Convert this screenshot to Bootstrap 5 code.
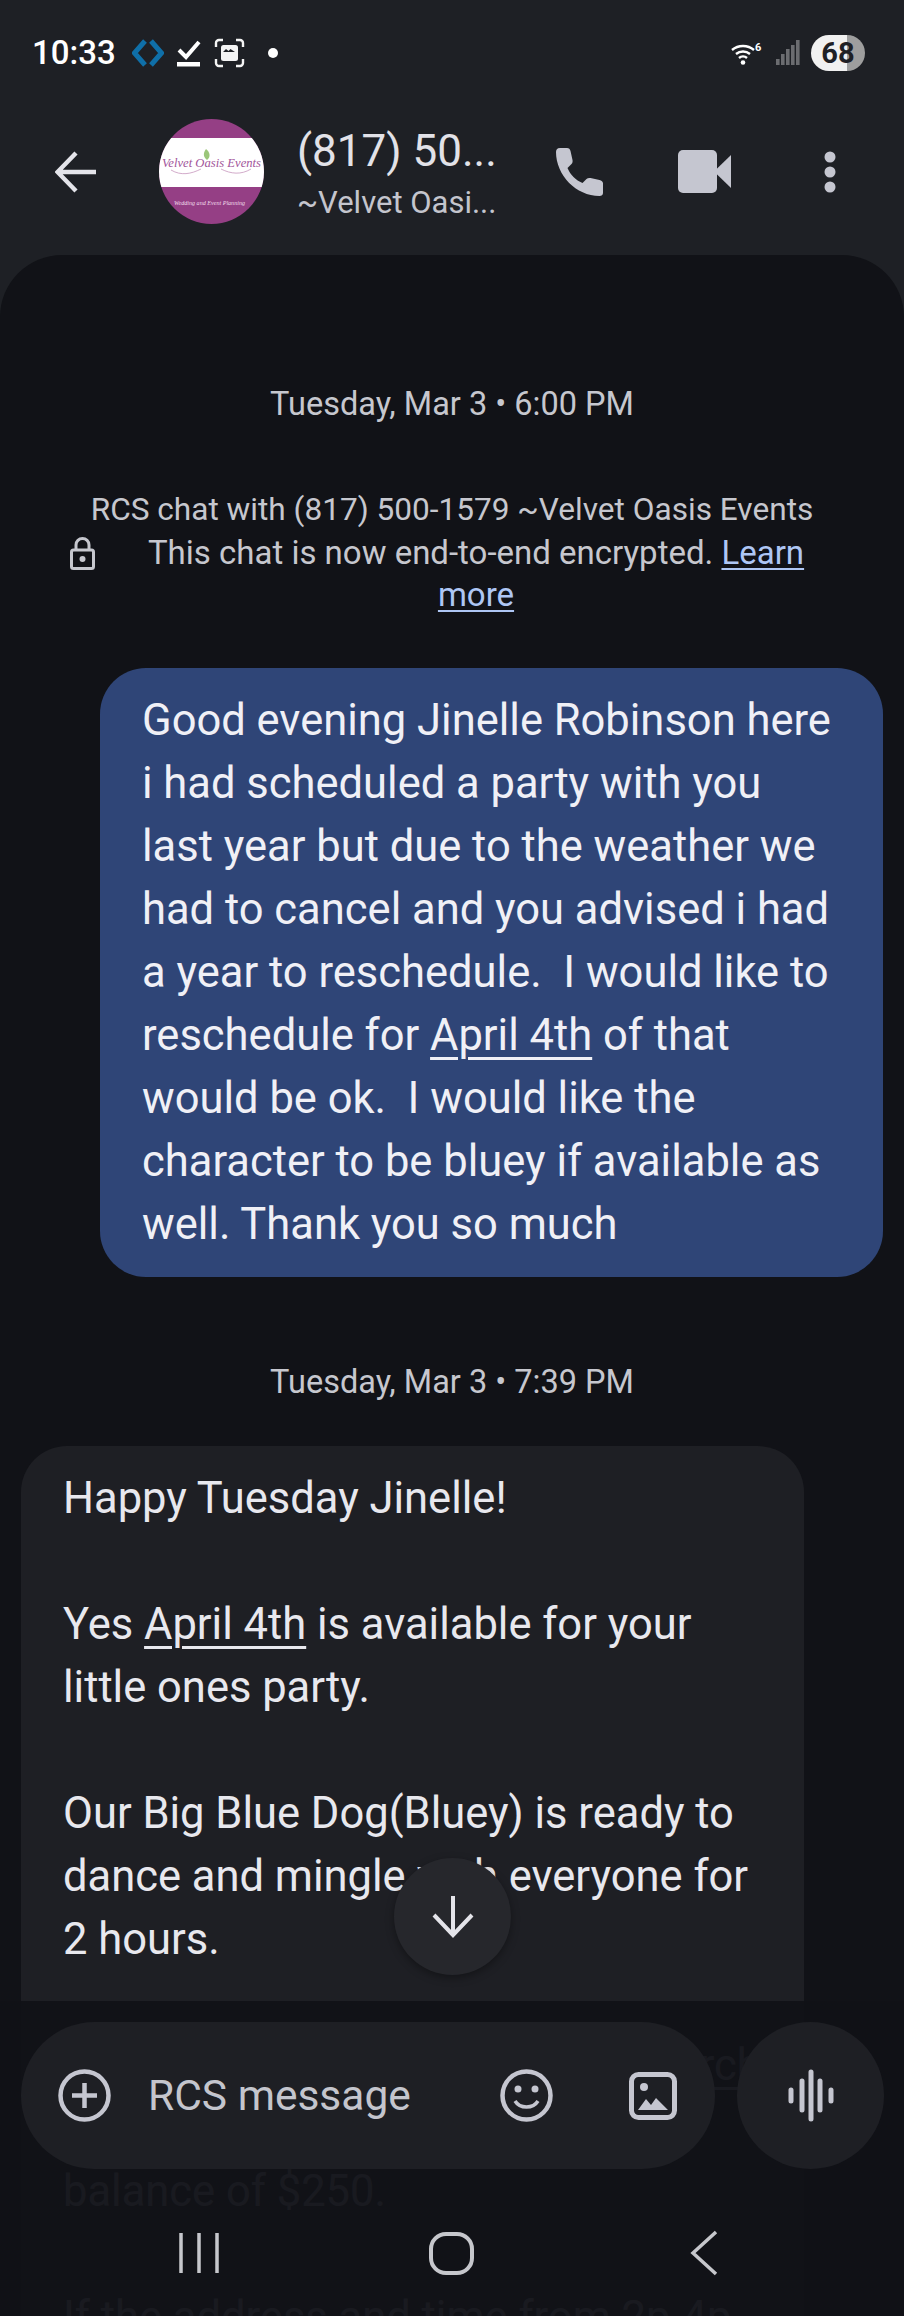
<!DOCTYPE html>
<html lang="en">
<head>
<meta charset="UTF-8">
<meta name="viewport" content="width=device-width, initial-scale=1.0">
<title>Messages</title>
<link href="https://cdn.jsdelivr.net/npm/bootstrap@5.3.0/dist/css/bootstrap.min.css" rel="stylesheet">
<style>
  body { background: #1e2025; font-family: Roboto, "Noto Sans", sans-serif; color: #e6e6ec; }
  .phone { width: 904px; height: 2316px; overflow: hidden; background: #1e2025; }
  .status-row { height: 106px; flex: none; padding: 0 39px 0 32px; }
  .status-time { font-size: 33px; font-weight: 500; color: #fff; margin-right: 16px; }
  .st-check { margin-left: 13px; }
  .st-shot { margin-left: 13px; }
  .st-dot { margin-left: 22px; }
  .st-wifi { margin-left: auto; margin-right: 13px; }
  .st-signal { margin-right: 11px; }
  .batt { width: 54px; height: 36px; border-radius: 18px; font-size: 29px; font-weight: 700; color: #1e2025; line-height: 36px; text-align: center; background: linear-gradient(90deg, #f1f1f1 0, #f1f1f1 36px, #9e9e9e 36px); }
  .app-row { height: 149px; flex: none; padding: 0 67px 18px 55px; }
  .avatar { width: 105px; height: 105px; margin-left: 62px; flex: none; }
  .chat-title { width: 200px; margin: 3px 0 0 33px; }
  .chat-title div { white-space: nowrap; line-height: 1; }
  .title-main { font-size: 44px; color: #e2e2e8; margin-bottom: 14px; }
  .title-sub { font-size: 31px; color: #c4c5cd; }
  .ab-video { margin-left: 75px; }
  .ab-dots { margin-left: 92px; }
  .chat-panel { flex: 1; background: #111217; border-radius: 62px 62px 0 0; padding: 0 21px; overflow: hidden; }
  .stamp { font-size: 32.5px; line-height: 42px; color: #c6c7ce; text-align: center; }
  .stamp-first { padding-top: 128px; }
  .stamp-second { margin: 84px 0 43px; }
  .enc-block { margin: 64px 0 51px; color: #c6c7ce; line-height: 42.5px; text-align: center; }
  .enc-one { font-size: 31.6px; }
  .enc-block a { color: #aec6f4; text-decoration-thickness: 2px; text-underline-offset: 4px; }
  .lock-col { width: 50px; margin-left: 49px; flex: none; text-align: left; }
  .enc-text { width: 680px; margin-left: 16px; font-size: 33px; }
  .bubble { font-size: 43.5px; line-height: 63px; padding: 21px 42px; white-space: pre-wrap; color: #e8e8ee; }
  .bubble u { text-decoration-thickness: 3px; text-underline-offset: 7px; }
  .bubble-out { width: 783px; margin-left: 79px; background: #2f4577; border-radius: 46px; color: #f0f0f6; }
  .bubble-in { width: 783px; background: #1e1f24; border-radius: 46px 46px 0 0; }
  .ghost-gap { padding-left: 575px; }
  .scrim { left: 0; right: 0; top: 2001px; bottom: 0; background: rgba(17, 18, 23, .96); }
  .jump-btn { width: 117px; height: 117px; left: 394px; top: 1858px; background: #26272c; box-shadow: 0 3px 8px rgba(0, 0, 0, .35); }
  .composer { left: 21px; top: 2022px; width: 694px; height: 147px; border-radius: 74px; background: #1e1f24; padding-left: 37px; }
  .composer-text { font-size: 42.5px; color: #c4c5cd; margin-left: 37px; width: 352px; }
  .cp-image { margin-left: 76px; }
  .mic-btn { left: 737px; top: 2022px; width: 147px; height: 147px; background: #1e1f24; }
  .nav-row { left: 0; right: 0; top: 2228px; height: 50px; }
</style>
</head>
<body class="m-0">
<div class="phone position-relative d-flex flex-column">

  <!-- status bar -->
  <div class="status-row d-flex align-items-center">
    <span class="status-time">10:33</span>
    <svg width="32" height="30" viewBox="0 0 32 30"><path d="M13 3 2.500 15 13 27M19 3 29.500 15 19 27" fill="none" stroke="#0f6fa8" stroke-width="5"/></svg>
    <svg width="24" height="28" viewBox="0 0 24 28" class="st-check"><path d="M2 11l7 7L22 3" fill="none" stroke="#fff" stroke-width="4"/><rect y="23" width="23" height="4.500" fill="#fff"/></svg>
    <svg width="31" height="30" viewBox="0 0 31 30" class="st-shot"><path d="M2 9V5a3 3 0 0 1 3-3h4M22 2h4a3 3 0 0 1 3 3v4M29 21v4a3 3 0 0 1-3 3h-4M9 28H5a3 3 0 0 1-3-3v-4" fill="none" stroke="#f4f4f4" stroke-width="2.400"/><rect x="7" y="7" width="17" height="16" rx="2.500" fill="#f4f4f4"/><path d="M9 14l3-3 2.500 2 2-2 4.500 3z" fill="#1e2025"/></svg>
    <svg width="12" height="12" viewBox="0 0 12 12" class="st-dot"><circle cx="6" cy="6" r="5" fill="#fff"/></svg>
    <svg width="32" height="24" viewBox="0 0 32 24" class="st-wifi"><path d="M1 9a17 17 0 0 1 22 0M5 13a11 11 0 0 1 14 0M8 17a6 6 0 0 1 8 0" fill="none" stroke="#fff" stroke-width="2.400"/><circle cx="12" cy="21.500" r="2.300" fill="#fff"/><text x="24" y="10" font-size="11" font-weight="700" fill="#fff" font-family="Roboto, sans-serif">6</text></svg>
    <svg width="24" height="26" viewBox="0 0 24 26" class="st-signal"><rect x="0" y="19" width="3.600" height="6" fill="#6b6c70"/><rect x="5" y="14" width="3.600" height="11" fill="#6b6c70"/><rect x="10" y="9" width="3.600" height="16" fill="#6b6c70"/><rect x="15" y="5" width="3.600" height="20" fill="#6b6c70"/><rect x="20" y="0" width="3.600" height="25" fill="#6b6c70"/></svg>
    <span class="batt">68</span>
  </div>

  <!-- app bar -->
  <div class="app-row d-flex align-items-center">
    <svg width="42" height="42" viewBox="0 0 42 42" class="flex-shrink-0"><path d="M41 21H3M21 2 2.500 21 21 40" fill="none" stroke="#e4e4ea" stroke-width="4.400"/></svg>
    <svg class="avatar" viewBox="0 0 105 105">
      <defs><clipPath id="round"><circle cx="52.500" cy="52.500" r="52.500"/></clipPath></defs>
      <g clip-path="url(#round)">
        <rect width="105" height="105" fill="#953f85"/>
        <rect y="19" width="105" height="49" fill="#fff"/>
        <path d="M48 41c-4-3-4-7-1-11 4 3 5 8 1 11z" fill="#9bc67a"/>
        <text x="3" y="48" font-size="13" font-style="italic" textLength="99" lengthAdjust="spacingAndGlyphs" fill="#a2559a" font-family="Liberation Serif, serif">Velvet Oasis Events</text>
        <path d="M12 51c10 6 20 4 30-1M62 50c10 5 20 6 30 0" fill="none" stroke="#c795bd" stroke-width=".8"/>
        <text x="15" y="86" font-size="7" font-style="italic" textLength="71" lengthAdjust="spacingAndGlyphs" fill="#f1dcec" font-family="Liberation Serif, serif">Wedding and Event Planning</text>
      </g>
    </svg>
    <div class="chat-title">
      <div class="title-main">(817) 50...</div>
      <div class="title-sub">~Velvet Oasi...</div>
    </div>
    <svg width="48" height="48" viewBox="0 0 48 48" class="ms-auto flex-shrink-0"><path d="M1 4c0-2 1-4 4-4h7c2 0 3 1 3.500 3l2 9c.3 1.500 0 3-1 4l-4 4c3 7 8 12 15 15l4-4c1-1 2.500-1.300 4-1l9 2c2 .5 3.500 1.500 3.500 3.500V45c0 2-1.500 3-3.500 3C21 48 1 27 1 4z" fill="#c5c6d0"/></svg>
    <svg width="53" height="43" viewBox="0 0 53 43" class="flex-shrink-0 ab-video"><rect width="39" height="43" rx="5" fill="#c5c6d0"/><path d="M36 21.500 53 5v33z" fill="#c5c6d0"/></svg>
    <svg width="14" height="42" viewBox="0 0 14 42" class="flex-shrink-0 ab-dots"><circle cx="7" cy="6" r="5.500" fill="#c5c6d0"/><circle cx="7" cy="21" r="5.500" fill="#c5c6d0"/><circle cx="7" cy="36" r="5.500" fill="#c5c6d0"/></svg>
  </div>

  <!-- conversation -->
  <div class="chat-panel">
    <div class="stamp stamp-first">Tuesday, Mar 3 • 6:00 PM</div>
    <div class="enc-block">
      <div class="enc-one">RCS chat with (817) 500-1579 ~Velvet Oasis Events</div>
      <div class="d-flex align-items-start">
        <div class="lock-col"><svg width="25" height="33" viewBox="0 0 25 33"><path d="M6 13V8a6.500 6.500 0 0 1 13 0v5" fill="none" stroke="#c6c7ce" stroke-width="3"/><rect x="1.500" y="13" width="22" height="18.500" rx="2" fill="none" stroke="#c6c7ce" stroke-width="3"/><circle cx="12.500" cy="22" r="3" fill="#c6c7ce"/></svg></div>
        <div class="enc-text">This chat is now end-to-end encrypted. <a href="#">Learn more</a></div>
      </div>
    </div>
    <div class="bubble bubble-out">Good evening Jinelle Robinson here
i had scheduled a party with you
last year but due to the weather we
had to cancel and you advised i had
a year to reschedule.  I would like to
reschedule for <u>April 4th</u> of that
would be ok.  I would like the
character to be bluey if available as
well. Thank you so much</div>
    <div class="stamp stamp-second">Tuesday, Mar 3 • 7:39 PM</div>
    <div class="bubble bubble-in">Happy Tuesday Jinelle!

Yes <u>April 4th</u> is available for your
little ones party.

Our Big Blue Dog(Bluey) is ready to
dance and mingle with everyone for
2 hours.

<span class="ghost-gap"><u>March</u></span>

balance of $250.

If the address and time from 2p-4p</div>
  </div>

  <!-- overlays -->
  <div class="scrim position-absolute"></div>
  <div class="jump-btn position-absolute rounded-circle d-flex align-items-center justify-content-center">
    <svg width="44" height="44" viewBox="0 0 44 44"><path d="M22 1v39M3 20l19 20 19-20" fill="none" stroke="#e4e4ea" stroke-width="4"/></svg>
  </div>
  <div class="composer position-absolute d-flex align-items-center">
    <svg width="53" height="53" viewBox="0 0 53 53" class="flex-shrink-0"><circle cx="26.500" cy="26.500" r="24" fill="none" stroke="#c5c6d0" stroke-width="4.500"/><path d="M26.500 14v25M14 26.500h25" stroke="#c5c6d0" stroke-width="4.500"/></svg>
    <span class="composer-text">RCS message</span>
    <svg width="53" height="53" viewBox="0 0 53 53" class="flex-shrink-0"><circle cx="26.500" cy="26.500" r="24" fill="none" stroke="#c5c6d0" stroke-width="4.500"/><circle cx="18" cy="20" r="3.500" fill="#c5c6d0"/><circle cx="35" cy="20" r="3.500" fill="#c5c6d0"/><path d="M15 32c5 8 18 8 23 0" fill="none" stroke="#c5c6d0" stroke-width="3.500"/></svg>
    <svg width="48" height="48" viewBox="0 0 48 48" class="flex-shrink-0 cp-image"><rect x="2.500" y="2.500" width="43" height="43" rx="7" fill="none" stroke="#c5c6d0" stroke-width="5"/><circle cx="15" cy="15" r="4" fill="#c5c6d0"/><path d="M9 38l8-11 5 6 5-7 12 12z" fill="#c5c6d0"/></svg>
  </div>
  <div class="mic-btn position-absolute rounded-circle d-flex align-items-center justify-content-center">
    <svg width="46" height="53" viewBox="0 0 46 53"><g stroke="#c5c6d0" stroke-width="5" stroke-linecap="round"><path d="M3 21v11M14 12v29M23 3v47M32 12v29M43 21v11"/></g></svg>
  </div>
  <div class="nav-row position-absolute">
    <svg width="904" height="50" viewBox="0 0 904 50" class="d-block">
      <g fill="none" stroke="#c6c7cc" stroke-width="3.500">
        <path d="M181 5v40M199 5v40M217 5v40"/>
        <rect x="431" y="6" width="41" height="39" rx="15" stroke-width="4"/>
        <path d="M716 4 693 25l23 21"/>
      </g>
    </svg>
  </div>
</div>
<script src="https://cdn.jsdelivr.net/npm/bootstrap@5.3.0/dist/js/bootstrap.bundle.min.js"></script>
</body>
</html>
